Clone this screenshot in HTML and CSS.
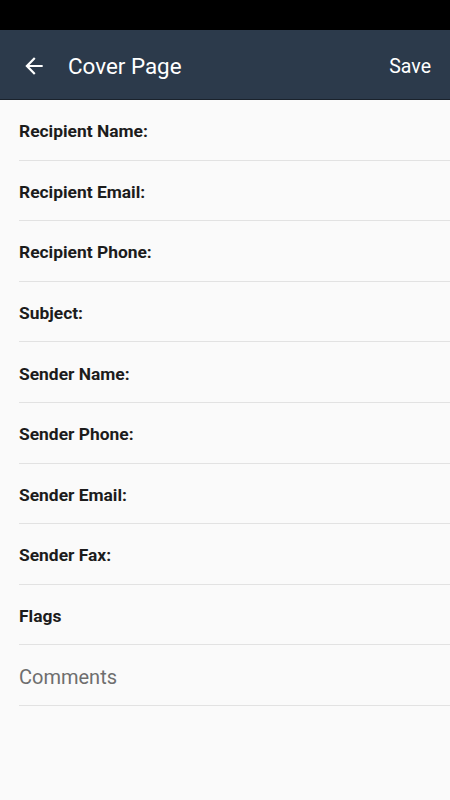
FILE: index.html
```html
<!DOCTYPE html>
<html lang="en">
<head>
<meta charset="utf-8">
<title>Cover Page</title>
<link rel="stylesheet" href="styles.css">
</head>
<body>
<div class="status-bar"></div>
<header class="app-bar">
  <button class="back" aria-label="Back">
    <svg width="24" height="24" viewBox="0 0 24 24"><path d="M20 11H7.83l5.59-5.59L12 4l-8 8 8 8 1.41-1.41L7.83 13H20v-2z" fill="#fff"/></svg>
  </button>
  <h1 class="title">Cover Page</h1>
  <span class="save">Save</span>
</header>
<main class="form">
  <div class="row"><span class="label">Recipient Name:</span></div>
  <div class="row"><span class="label">Recipient Email:</span></div>
  <div class="row"><span class="label">Recipient Phone:</span></div>
  <div class="row"><span class="label">Subject:</span></div>
  <div class="row"><span class="label">Sender Name:</span></div>
  <div class="row"><span class="label">Sender Phone:</span></div>
  <div class="row"><span class="label">Sender Email:</span></div>
  <div class="row"><span class="label">Sender Fax:</span></div>
  <div class="row"><span class="label">Flags</span></div>
  <div class="row"><span class="placeholder">Comments</span></div>
</main>
</body>
</html>
```
FILE: styles.css
```css
* { box-sizing: border-box; }
html, body {
  margin: 0;
  padding: 0;
  height: 100%;
  background: #fafafa;
  font-family: Roboto, "Noto Sans", sans-serif;
}
.status-bar {
  height: 30px;
  background: #000;
}
.app-bar {
  height: 70px;
  background: #2c3a4b;
  border-bottom: 1px solid #1a222c;
  display: flex;
  align-items: center;
  padding: 3px 19px 0 21px;
}
.back {
  background: none;
  border: 0;
  padding: 0;
  width: 26px;
  height: 26px;
  display: flex;
  align-items: center;
  justify-content: center;
}
.back svg { width: 26px; height: 26px; }
.title {
  margin: 0 0 0 21px;
  flex: 1;
  color: #fff;
  font-size: 22.4px;
  font-weight: 400;
}
.save {
  color: #fff;
  font-size: 19.5px;
}
.form {
  padding-left: 19px;
}
.row {
  height: 60.6px;
  border-bottom: 1px solid #e2e2e2;
  display: flex;
  align-items: center;
  padding-top: 3px;
}
.label {
  font-size: 17.4px;
  font-weight: 700;
  color: #1c1c1c;
}
.placeholder {
  font-size: 20px;
  color: #6e6e6e;
}
```
